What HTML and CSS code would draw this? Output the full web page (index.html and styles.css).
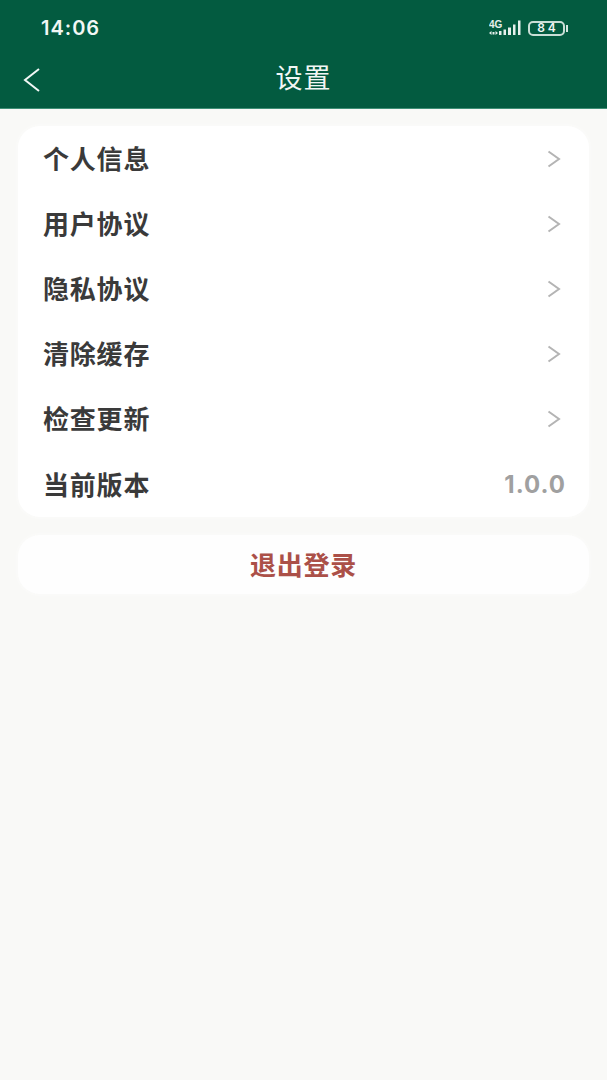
FILE: index.html
```html
<!DOCTYPE html>
<html lang="zh-CN">
<head>
    <meta charset="UTF-8">
    <meta name="viewport" content="width=device-width, initial-scale=1.0">
    <title>设置</title>
    <link rel="stylesheet" href="styles.css">
</head>
<body>
    <header class="header">
        <div class="status-bar">
            <span class="time">14:06</span>
            <div class="status-icons">
                <svg class="signal" width="32" height="16" viewBox="0 0 32 16">
                    <text x="0" y="7.500" class="signal-label">4G</text>
                    <path d="M0 13 L2.500 11 V15 Z M9 13 L6.500 11 V15 Z" fill="#e6f0ec"/>
                    <rect x="3.500" y="12" width="2" height="2.500" fill="#e6f0ec"/>
                    <rect x="10" y="11" width="2.500" height="4" fill="#e6f0ec"/>
                    <rect x="14.500" y="9.500" width="2.500" height="5.500" fill="#e6f0ec"/>
                    <rect x="19" y="7.500" width="3" height="7.500" fill="#e6f0ec"/>
                    <rect x="24" y="4.500" width="2.500" height="10.500" fill="#e6f0ec"/>
                    <rect x="29" y="0.500" width="2.500" height="14.500" fill="#e6f0ec"/>
                </svg>
                <div class="battery"><span class="battery-level">84</span></div>
                <span class="battery-cap"></span>
            </div>
        </div>
        <div class="title-bar">
            <svg class="back" width="20" height="26" viewBox="0 0 20 26">
                <path d="M17 2 L3 13 L17 24" stroke="#f2f7f5" stroke-width="2" fill="none"/>
            </svg>
            <h1>设置</h1>
        </div>
    </header>

    <main class="content">
        <section class="card">
            <div class="row"><span class="label">个人信息</span><svg class="arrow" width="14" height="18" viewBox="0 0 14 18"><path d="M1.500 1.500 L12 9 L1.500 16.500"/></svg></div>
            <div class="row"><span class="label">用户协议</span><svg class="arrow" width="14" height="18" viewBox="0 0 14 18"><path d="M1.500 1.500 L12 9 L1.500 16.500"/></svg></div>
            <div class="row"><span class="label">隐私协议</span><svg class="arrow" width="14" height="18" viewBox="0 0 14 18"><path d="M1.500 1.500 L12 9 L1.500 16.500"/></svg></div>
            <div class="row"><span class="label">清除缓存</span><svg class="arrow" width="14" height="18" viewBox="0 0 14 18"><path d="M1.500 1.500 L12 9 L1.500 16.500"/></svg></div>
            <div class="row"><span class="label">检查更新</span><svg class="arrow" width="14" height="18" viewBox="0 0 14 18"><path d="M1.500 1.500 L12 9 L1.500 16.500"/></svg></div>
            <div class="row"><span class="label">当前版本</span><span class="version">1.0.0</span></div>
        </section>
        <div class="logout"><span class="label">退出登录</span></div>
    </main>
</body>
</html>
```
FILE: styles.css
```css
* {
    margin: 0;
    padding: 0;
    box-sizing: border-box;
}

body {
    width: 607px;
    height: 1080px;
    overflow: hidden;
    background-color: #f9f9f7;
    font-family: "Noto Sans CJK SC", "Liberation Sans", sans-serif;
}

/* Top bar */
.header {
    height: 109px;
    background-color: #035b40;
    border-bottom: 1px solid #3f8f76;
    color: #f2f7f5;
}

.status-bar {
    height: 56px;
    padding: 0 39px 0 41px;
    display: flex;
    align-items: center;
    justify-content: space-between;
}

.time {
    font-family: "Inter", "Liberation Sans", sans-serif;
    font-size: 20px;
    font-weight: 600;
    letter-spacing: 1px;
}

.status-icons {
    display: flex;
    align-items: center;
}

.signal {
    margin-right: 7px;
}

.signal-label {
    font-family: "Liberation Sans", sans-serif;
    font-size: 10px;
    font-weight: 700;
    fill: #e6f0ec;
}

.battery {
    width: 37px;
    height: 15px;
    border: 2px solid #c9ded6;
    border-radius: 5px;
    display: flex;
    align-items: center;
    justify-content: center;
}

.battery-level {
    font-family: "Inter", "Liberation Sans", sans-serif;
    font-size: 12px;
    font-weight: 600;
    letter-spacing: 3px;
    margin-right: -3px;
    line-height: 1;
}

.battery-cap {
    width: 2px;
    height: 7px;
    margin-left: 1px;
    background-color: #d5e5df;
}

.title-bar {
    height: 52px;
    display: flex;
    align-items: center;
    justify-content: center;
    position: relative;
}

.title-bar h1 {
    font-size: 27px;
    font-weight: 400;
    line-height: 1;
    letter-spacing: 1px;
    margin-bottom: 12px;
}

.back {
    position: absolute;
    left: 22px;
    top: 11px;
}

/* List */
.content {
    padding: 17px 18px 0;
}

.card {
    background-color: #fff;
    border-radius: 22px;
    height: 391px;
    padding: 0 25px;
    box-shadow: 0 0 4px #fdfdfc;
}

.row {
    height: 65.200px;
    display: flex;
    align-items: center;
    justify-content: space-between;
}

.label {
    font-size: 26px;
    font-weight: 700;
    line-height: 1;
    letter-spacing: 0.800px;
    color: #3a3a3a;
    margin-bottom: 2px;
}

.arrow {
    margin-right: 3px;
}

.arrow path {
    fill: none;
    stroke: #b4b4b4;
    stroke-width: 2;
}

.version {
    font-family: "Inter", "Liberation Sans", sans-serif;
    font-size: 24px;
    font-weight: 700;
    color: #a0a0a0;
    letter-spacing: 1px;
    margin-right: -2px;
}

.logout {
    margin-top: 18px;
    height: 59px;
    background-color: #fefefe;
    border-radius: 22px;
    box-shadow: 0 0 4px #fdfdfc;
    display: flex;
    align-items: center;
    justify-content: center;
}

.logout .label {
    color: #ab5048;
}
```
